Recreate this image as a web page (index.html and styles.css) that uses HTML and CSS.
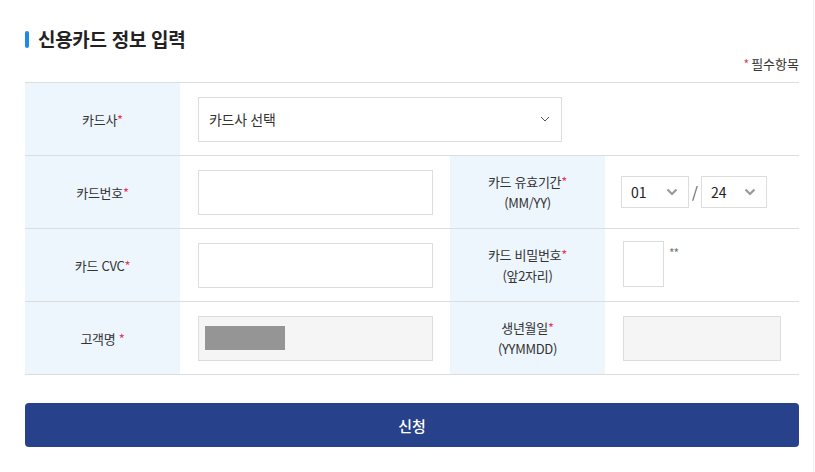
FILE: index.html
```html
<!DOCTYPE html>
<html lang="ko">
<head>
<meta charset="utf-8">
<title>신용카드 정보 입력</title>
<link rel="stylesheet" href="styles.css">
</head>
<body>
<div class="page">
  <div class="wrap">
    <h2 class="title"><span class="title-bar"></span>신용카드 정보 입력</h2>
    <p class="req-note"><span class="star">*</span>필수항목</p>
    <div class="form-table">
      <div class="row">
        <div class="label"><span class="line">카드사<span class="star">*</span></span></div>
        <div class="cell span3">
          <div class="select select-card">
            <span>카드사 선택</span>
            <svg class="chev-thin" width="10" height="6" viewBox="0 0 10 6"><path d="M1 1 L5 5 L9 1" fill="none" stroke="#555" stroke-width="1"/></svg>
          </div>
        </div>
      </div>
      <div class="row">
        <div class="label"><span class="line">카드번호<span class="star">*</span></span></div>
        <div class="cell"><div class="input input-wide"></div></div>
        <div class="label"><span class="line">카드 유효기간<span class="star">*</span></span><span class="line">(MM/YY)</span></div>
        <div class="cell cell-r">
          <div class="select select-sm s1">
            <span>01</span>
            <svg width="12" height="8" viewBox="0 0 12 8"><path d="M1.5 1.5 L6 6 L10.5 1.5" fill="none" stroke="#9a9a9a" stroke-width="2.2"/></svg>
          </div>
          <span class="slash">/</span>
          <div class="select select-sm s2">
            <span>24</span>
            <svg width="12" height="8" viewBox="0 0 12 8"><path d="M1.5 1.5 L6 6 L10.5 1.5" fill="none" stroke="#9a9a9a" stroke-width="2.2"/></svg>
          </div>
        </div>
      </div>
      <div class="row">
        <div class="label"><span class="line">카드 CVC<span class="star">*</span></span></div>
        <div class="cell"><div class="input input-wide"></div></div>
        <div class="label"><span class="line">카드 비밀번호<span class="star">*</span></span><span class="line">(앞2자리)</span></div>
        <div class="cell cell-r cell-pw">
          <div class="input input-pw"></div>
          <span class="pw-mask">**</span>
        </div>
      </div>
      <div class="row">
        <div class="label"><span class="line">고객명 <span class="star">*</span></span></div>
        <div class="cell"><div class="input input-wide readonly"><span class="masked"></span></div></div>
        <div class="label"><span class="line">생년월일<span class="star">*</span></span><span class="line">(YYMMDD)</span></div>
        <div class="cell cell-r"><div class="input input-birth readonly"></div></div>
      </div>
    </div>
    <button class="submit" type="button">신청</button>
  </div>
</div>
</body>
</html>
```

FILE: styles.css
```css
html, body {
  margin: 0;
  padding: 0;
  background: #fff;
}
body {
  font-family: "Noto Sans CJK KR", "Noto Sans", sans-serif;
  color: #333;
}
.page {
  width: 813px;
  min-height: 472px;
  border-right: 1px solid #eeeeee;
}
.wrap {
  padding: 26px 0 0 25px;
  width: 774px;
}
.title {
  margin: 0;
  display: flex;
  align-items: center;
  font-size: 19px;
  font-weight: 700;
  color: #222;
  line-height: 26px;
  height: 26px;
  letter-spacing: -0.3px;
}
.title-bar {
  display: inline-block;
  width: 4px;
  height: 17px;
  border-radius: 2px;
  background: #1c8be6;
  margin-right: 9px;
}
.req-note {
  margin: 2px 0 0;
  text-align: right;
  font-size: 13px;
  line-height: 20px;
  height: 28px;
  color: #333;
}
.star {
  color: #e8365e;
}
.req-note .star {
  font-size: 12px;
  margin-right: 2px;
}
.form-table {
  border-top: 1px solid #dddddd;
}
.row {
  display: grid;
  grid-template-columns: 155px 270px 155px 194px;
  height: 72px;
  border-bottom: 1px solid #dddddd;
}
.label {
  background: #eef6fd;
  display: flex;
  flex-direction: column;
  align-items: center;
  justify-content: center;
  text-align: center;
  font-size: 13px;
  line-height: 21px;
  color: #333;
  letter-spacing: -0.3px;
}
.line {
  display: block;
  white-space: pre;
}
.cell {
  display: flex;
  align-items: center;
  padding-left: 18px;
}
.cell.span3 {
  grid-column: span 3;
}
.cell-r {
  padding-left: 16px;
}
.select {
  box-sizing: border-box;
  border: 1px solid #dddddd;
  background: #fff;
  display: flex;
  align-items: center;
  justify-content: space-between;
}
.select-card {
  width: 364px;
  height: 45px;
  padding: 0 11px 0 10px;
  font-size: 14px;
  color: #333;
  letter-spacing: -0.3px;
}
.select-sm {
  height: 32px;
  padding: 0 10px 0 9px;
  font-size: 14px;
  color: #222;
}
.s1 { width: 68px; }
.s2 { width: 66px; }
.slash {
  font-size: 15px;
  color: #555;
  margin: 0 3px 0 3px;
}
.input {
  box-sizing: border-box;
  border: 1px solid #dddddd;
  background: #fff;
  height: 45px;
}
.input-wide {
  width: 235px;
}
.readonly {
  background: #f5f5f5;
}
.masked {
  display: block;
  width: 80px;
  height: 24px;
  background: #959595;
  margin: 9px 0 0 6px;
}
.cell-pw {
  align-items: flex-start;
  padding-top: 12px;
  padding-left: 18px;
}
.input-pw {
  width: 41px;
  height: 46px;
}
.pw-mask {
  font-size: 12px;
  line-height: 12px;
  color: #777;
  margin: 6px 0 0 5px;
  letter-spacing: -1px;
}
.input-birth {
  width: 158px;
  margin-left: 2px;
}
.submit {
  display: block;
  margin-top: 28px;
  width: 774px;
  height: 44px;
  border: none;
  border-radius: 4px;
  background: #27428a;
  color: #fff;
  font-family: "Noto Sans CJK KR", "Noto Sans", sans-serif;
  font-size: 15px;
  font-weight: 500;
  cursor: pointer;
}
```
